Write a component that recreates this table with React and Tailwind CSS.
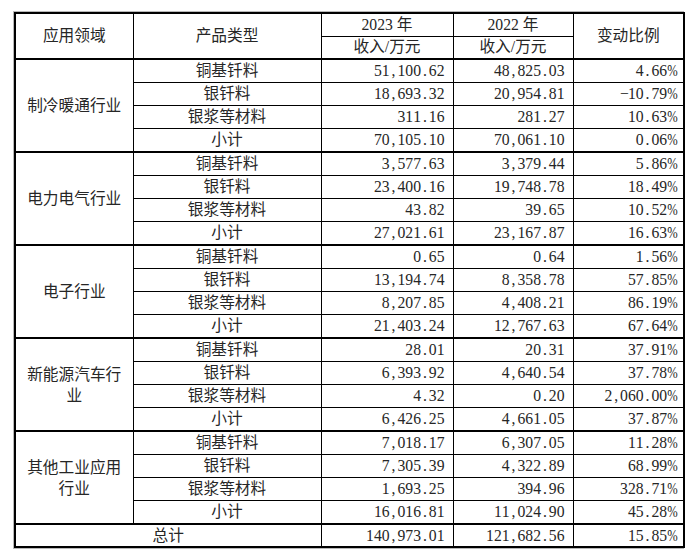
const groups = [
  {
    name: '制冷暖通行业',
    rows: [
      ['铜基钎料', '51,100.62', '48,825.03', '4.66%'],
      ['银钎料', '18,693.32', '20,954.81', '-10.79%'],
      ['银浆等材料', '311.16', '281.27', '10.63%'],
      ['小计', '70,105.10', '70,061.10', '0.06%'],
    ],
  },
  {
    name: '电力电气行业',
    rows: [
      ['铜基钎料', '3,577.63', '3,379.44', '5.86%'],
      ['银钎料', '23,400.16', '19,748.78', '18.49%'],
      ['银浆等材料', '43.82', '39.65', '10.52%'],
      ['小计', '27,021.61', '23,167.87', '16.63%'],
    ],
  },
  {
    name: '电子行业',
    rows: [
      ['铜基钎料', '0.65', '0.64', '1.56%'],
      ['银钎料', '13,194.74', '8,358.78', '57.85%'],
      ['银浆等材料', '8,207.85', '4,408.21', '86.19%'],
      ['小计', '21,403.24', '12,767.63', '67.64%'],
    ],
  },
  {
    name: '新能源汽车行业',
    rows: [
      ['铜基钎料', '28.01', '20.31', '37.91%'],
      ['银钎料', '6,393.92', '4,640.54', '37.78%'],
      ['银浆等材料', '4.32', '0.20', '2,060.00%'],
      ['小计', '6,426.25', '4,661.05', '37.87%'],
    ],
  },
  {
    name: '其他工业应用行业',
    rows: [
      ['铜基钎料', '7,018.17', '6,307.05', '11.28%'],
      ['银钎料', '7,305.39', '4,322.89', '68.99%'],
      ['银浆等材料', '1,693.25', '394.96', '328.71%'],
      ['小计', '16,016.81', '11,024.90', '45.28%'],
    ],
  },
]

// SimSun-style half-width cells for digits and punctuation
function Num({ value }) {
  return (
    <span className="whitespace-nowrap">
      {value.split('').map((c, i) => (
        <span key={i} className="inline-block w-[7.85px] text-center">
          {c === '%' ? (
            <span className="inline-block scale-x-80 -translate-x-[1px]">%</span>
          ) : c === '-' ? (
            '−'
          ) : (
            c
          )}
        </span>
      ))}
    </span>
  )
}

const cell = 'border border-black px-[6px] p-0'
const num = 'border border-black text-right pr-[8px] pl-0'

export default function App() {
  return (
    <div className="bg-white w-[700px] h-[558px] pt-[11px] pl-[13px]">
      <div className="w-[671px] border border-[#b8b8b8]">
        <table
          className="table-fixed border-collapse border-2 border-black w-[669px] text-[#262626] text-[15.7px] leading-none"
          style={{ fontFamily: '"Liberation Serif", "Noto Sans CJK SC", serif' }}
        >
          <colgroup>
            <col className="w-[118px]" />
            <col className="w-[188px]" />
            <col className="w-[132px]" />
            <col className="w-[120px]" />
            <col className="w-[111px]" />
          </colgroup>
          <thead>
            <tr className="h-[23px]">
              <th rowSpan={2} className={`${cell} font-normal text-center border-b-2`}>应用领域</th>
              <th rowSpan={2} className={`${cell} font-normal text-center border-b-2`}>产品类型</th>
              <th className={`${cell} font-normal text-center`}>2023 年</th>
              <th className={`${cell} font-normal text-center`}>2022 年</th>
              <th rowSpan={2} className={`${cell} font-normal text-center border-b-2`}>变动比例</th>
            </tr>
            <tr className="h-[23px]">
              <th className={`${cell} font-normal text-center border-b-2`}>收入/万元</th>
              <th className={`${cell} font-normal text-center border-b-2`}>收入/万元</th>
            </tr>
          </thead>
          <tbody>
            {groups.map((g) =>
              g.rows.map((r, i) => (
                <tr key={g.name + i} className="h-[23.25px]">
                  {i === 0 && (
                    <td
                      rowSpan={4}
                      className={`${cell} text-center leading-[21px] border-b-2 border-t-2`}
                    >
                      {g.name}
                    </td>
                  )}
                  <td className={`${cell} text-center ${i === 3 ? 'border-b-2' : ''}`}>{r[0]}</td>
                  <td className={`${num} ${i === 3 ? 'border-b-2' : ''}`}><Num value={r[1]} /></td>
                  <td className={`${num} ${i === 3 ? 'border-b-2' : ''}`}><Num value={r[2]} /></td>
                  <td className={`${num} ${i === 3 ? 'border-b-2' : ''}`}><Num value={r[3]} /></td>
                </tr>
              ))
            )}
            <tr className="h-[23.25px]">
              <td colSpan={2} className={`${cell} text-center`}>总计</td>
              <td className={num}><Num value="140,973.01" /></td>
              <td className={num}><Num value="121,682.56" /></td>
              <td className={num}><Num value="15.85%" /></td>
            </tr>
          </tbody>
        </table>
      </div>
    </div>
  )
}
